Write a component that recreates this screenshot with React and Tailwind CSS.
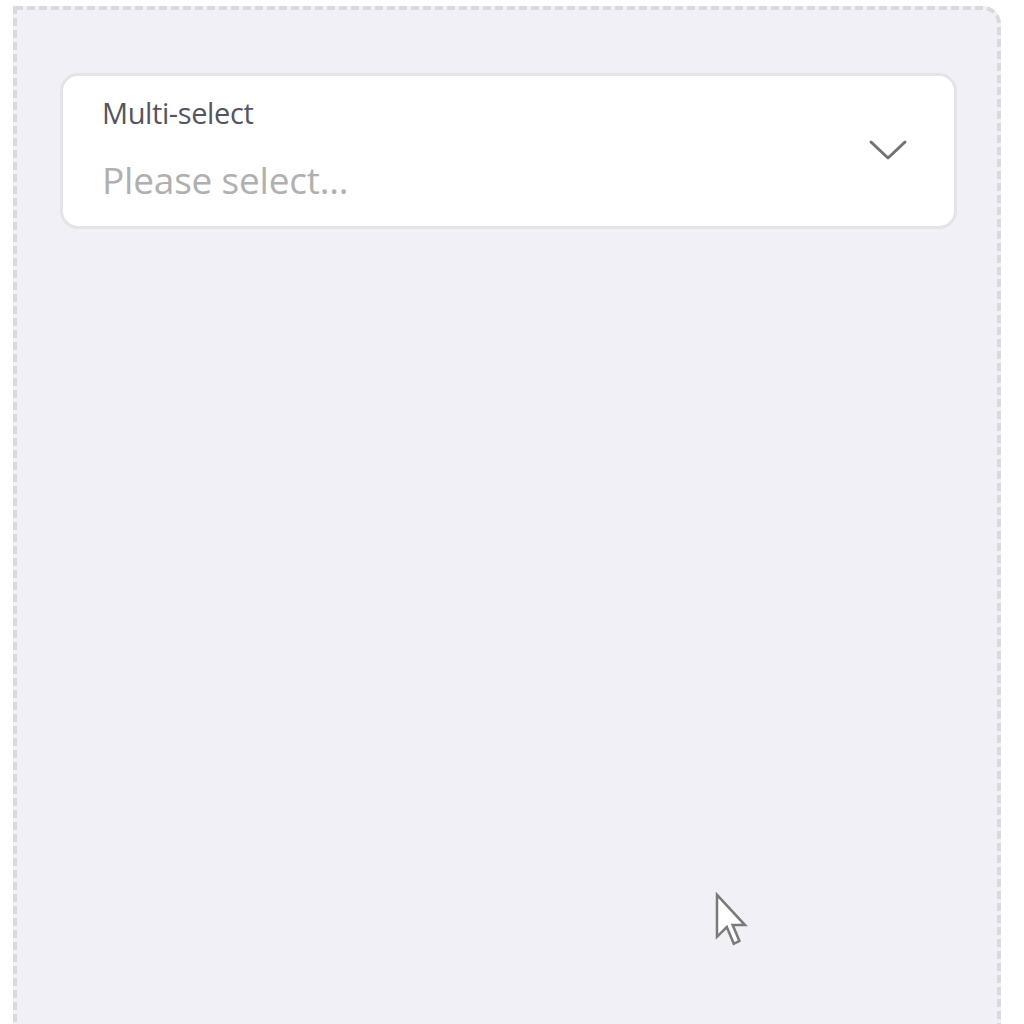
import React from "react";

export default function App() {
  return (
    <div className="w-[1024px] h-[1024px] overflow-hidden bg-white relative" style={{ fontFamily: '"Open Sans", "Noto Sans", sans-serif' }}>
      <div className="ml-[13px] mt-[6px] w-[988px] h-[1040px] border-4 border-dashed border-[#d9d9de] rounded-tr-[18px] bg-[#f0f0f6] pt-[63px] pl-[43px] pr-[40px]">
        <div className="h-[156px] rounded-[18px] border-[3px] border-[#e3e3e8] bg-white flex items-start pt-[20px] pl-[39px] pr-[46px]">
          <div className="flex-1 flex flex-col">
            <span className="text-[29px] leading-[34px] text-[#55555f] tracking-[-0.4px]">Multi-select</span>
            <span className="mt-[28px] text-[37px] leading-[44px] text-[#b0b0b0] tracking-[-0.2px]">Please select...</span>
          </div>
          <svg width="40" height="24" viewBox="0 0 40 24" className="mt-[42px]">
            <path d="M3 4 L20 20 L37 4" fill="none" stroke="#737373" strokeWidth="3" strokeLinecap="round" strokeLinejoin="round" />
          </svg>
        </div>
      </div>
      <svg className="absolute left-[714px] top-[892px]" width="34" height="56" viewBox="0 0 12 20">
        <path d="M1 1 L1 16 L4.5 12.5 L7 18.5 L9 17.5 L6.6 11.8 L11 11.8 Z" fill="#ffffff" stroke="#7a7a7a" strokeWidth="0.9" strokeLinejoin="miter" />
      </svg>
    </div>
  );
}
